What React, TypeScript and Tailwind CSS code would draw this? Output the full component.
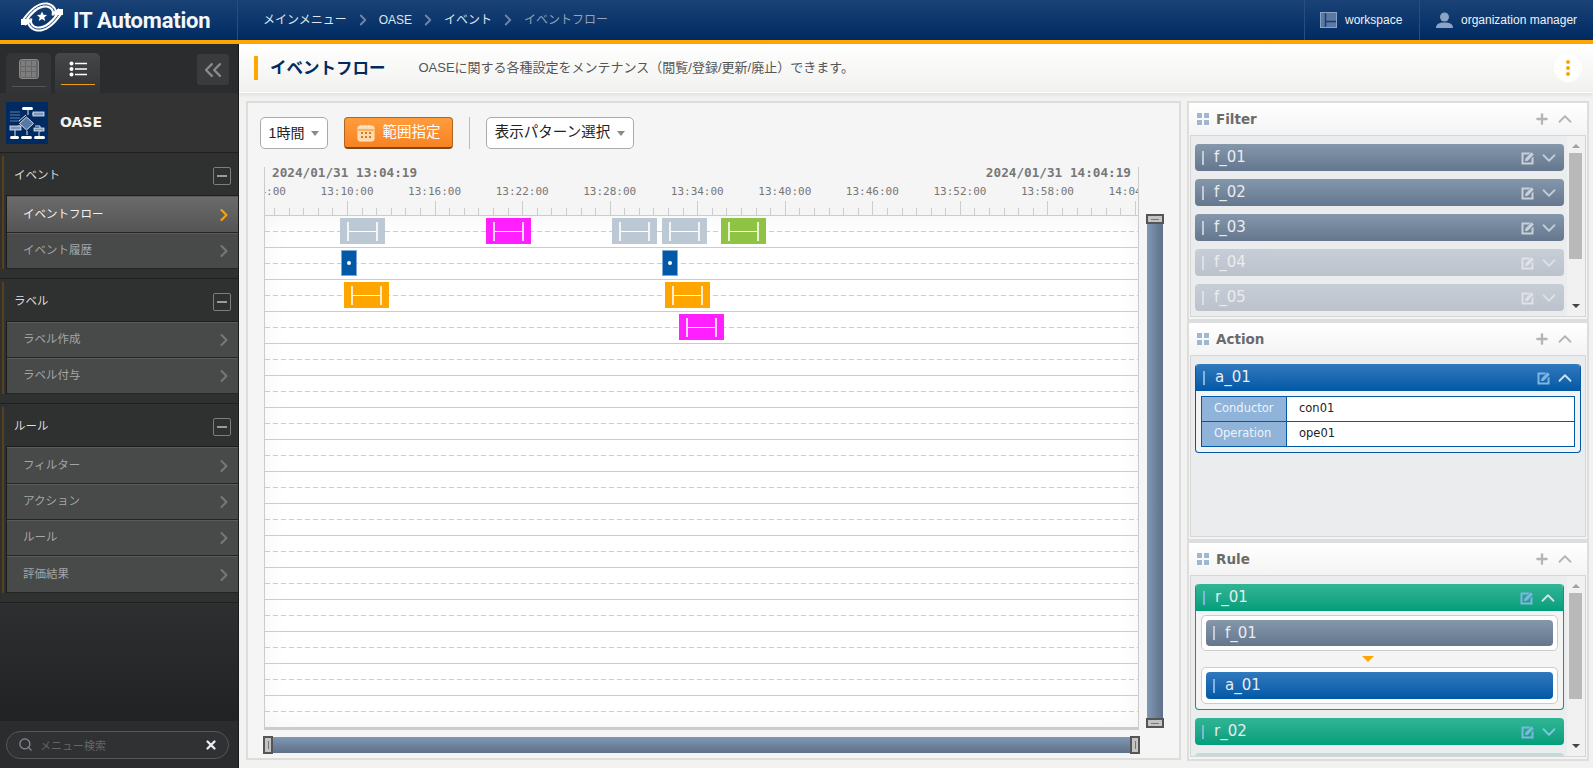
import React from 'react';
import { ChevronDown, ChevronRight, ChevronUp, ChevronsLeft, Plus, Search, X } from 'lucide-react';

const jp = "font-['Liberation_Sans','Noto_Sans_CJK_JP',sans-serif]";
const dv = "font-['DejaVu_Sans','Noto_Sans_CJK_JP',sans-serif]";
const mono = "font-['DejaVu_Sans_Mono',monospace]";

const timeLabels = ['13:04:00', '13:10:00', '13:16:00', '13:22:00', '13:28:00', '13:34:00', '13:40:00', '13:46:00', '13:52:00', '13:58:00', '14:04:00'];
const MAJOR = 87.55;
const FIRST_MAJOR = -5.5;

// bars on the time canvas, x relative to chart left, row index
const bars = [
  { x: 75, row: 0, w: 45, kind: 'grey' },
  { x: 221, row: 0, w: 45, kind: 'magenta' },
  { x: 347, row: 0, w: 45, kind: 'grey' },
  { x: 397, row: 0, w: 45, kind: 'grey' },
  { x: 456, row: 0, w: 45, kind: 'green' },
  { x: 79, row: 2, w: 45, kind: 'orange' },
  { x: 400, row: 2, w: 45, kind: 'orange' },
  { x: 414, row: 3, w: 45, kind: 'magenta' },
];

const barColor: Record<string, string> = {
  grey: 'bg-[#bcc8d3]',
  magenta: 'bg-[#ff1fff]',
  green: 'bg-[#8fc343]',
  orange: 'bg-[#ffa500]',
};

const EditIcon = ({ className = '' }: { className?: string }) => (
  <svg width="14" height="14" viewBox="0 0 14 14" className={className}>
    <path d="M.5 1.500h9L7.500 3.500H2.500v8h8V7.500l2-2V13.500H.5z" fill="currentColor" />
    <path d="M4.500 7.500 10.500 1.200l2.300 2.300-6 6.200-2.800.6z" fill="currentColor" />
  </svg>
);

const Logo = () => (
  <svg width="42" height="32" viewBox="0 0 42 32" className="-mt-[6px] shrink-0">
    <g fill="none" strokeLinecap="butt">
      <path d="M3 20C10 10 17 3 26 4c5 1 9 5 7 11" stroke="#fff" strokeWidth="5" />
      <path d="M3 20C10 10 17 3 26 4c5 1 9 5 7 11" stroke="#1a4277" strokeWidth="1" />
      <path d="M39 12C32 22 25 29 16 28c-5-1-9-5-7-11" stroke="#fff" strokeWidth="5" />
      <path d="M39 12C32 22 25 29 16 28c-5-1-9-5-7-11" stroke="#1a4277" strokeWidth="1" />
      <path d="M33 13 39 9M9 19 3 23" stroke="#fff" strokeWidth="4" />
    </g>
    <rect x="0" y="18" width="6" height="6" fill="#fff" />
    <rect x="36" y="8" width="6" height="6" fill="#fff" />
    <path d="M21 10.500l1.500 3.300 3.500.3-2.700 2.300.9 3.500-3.200-1.900-3.200 1.900.9-3.500-2.700-2.300 3.500-.3z" fill="#fff" />
  </svg>
);

const OaseIcon = () => (
  <svg width="42" height="42" viewBox="0 0 42 42" className="shrink-0">
    <rect width="42" height="42" fill="#002b62" />
    <g stroke="#dfe6f0" strokeWidth="1" fill="none">
      <path d="M22 6v7M32 12H26M12 24H14M29 24h5v6M21 29v4M9 27v7M33 30v4" />
      <path d="M4 10h10M4 13h10M4 16h10M4 19h10" stroke="#5d7ca8" />
      <path d="M20 13l-7 6" />
    </g>
    <rect x="16" y="5" width="11" height="3" rx="1.500" fill="#fff" />
    <rect x="27" y="10" width="11" height="4" fill="#7c97bd" stroke="#fff" strokeWidth=".7" />
    <path d="M20.500 15l7 6.500-7 6.500-7-6.500z" fill="#5678a8" stroke="#fff" strokeWidth=".8" />
    <rect x="4" y="24" width="11" height="4" fill="#7c97bd" stroke="#fff" strokeWidth=".7" />
    <rect x="28" y="26" width="10" height="3" fill="#7c97bd" stroke="#fff" strokeWidth=".7" />
    <rect x="15" y="34" width="11" height="3" rx="1.500" fill="#fff" />
    <rect x="4" y="34" width="9" height="3" rx="1.500" fill="#fff" />
    <rect x="28" y="34" width="11" height="3" rx="1.500" fill="#fff" />
  </svg>
);

const MenuItem = ({ label, active = false, tall = false }: { label: string; active?: boolean; tall?: boolean }) => (
  <div
    className={`flex items-center justify-between border-b border-b-[#252525] border-t border-t-[#5a5c5c] pl-[16px] pr-[4px] ${tall ? 'h-[37px]' : 'h-[36px]'} ${
      active ? 'bg-gradient-to-b from-[#6b6b6b] to-[#555555] text-[#f2f2f2]' : 'bg-[#484a4a] text-[#a5a5a5]'
    }`}
  >
    <span className="text-[11.500px]">{label}</span>
    <ChevronRight size={20} strokeWidth={2.5} className={active ? 'text-[#ffa500]' : 'text-[#777777]'} />
  </div>
);

const MenuSection = ({ title, items, active, tallItems = [] }: { title: string; items: string[]; active?: string; tallItems?: string[] }) => (
  <div className="border-b border-b-[#1f1f1f] bg-[#2f3030] pb-[9px] pt-[3px]">
    <div className="relative ml-[2px] border-l-[2px] border-l-[#5b3f1c]">
      <div className="flex h-[39px] items-center justify-between pl-[10px] pr-[7px] text-[11.500px] text-[#dddddd]">
        <span>{title}</span>
        <span className="flex h-[18px] w-[18px] items-center justify-center rounded-[2px] border border-[#7d7d7d]">
          <span className="h-[2px] w-[10px] bg-[#9a9a9a]" />
        </span>
      </div>
      <div className="ml-[2px] border-l border-t border-[#1d1d1d]">
        {items.map((item) => (
          <MenuItem key={item} label={item} active={item === active} tall={item === active || tallItems.includes(item)} />
        ))}
      </div>
    </div>
  </div>
);

const Sidebar = () => (
  <aside className={`flex w-[239px] shrink-0 flex-col border-r border-r-[#1a1a1a] bg-[#2b2c2e] ${jp}`}>
    <div className="flex h-[49px] shrink-0 items-end pl-[6px] pr-[9px]">
      <div className="mr-[4px] flex h-[40px] w-[45px] flex-col items-center justify-center rounded-t-[5px] bg-[#343536]">
        <span className="grid h-[20px] w-[20px] grid-cols-3 gap-[1px] rounded-[3px] border border-[#8a8a8a] bg-[#666666] p-[1px]">
          {Array.from({ length: 9 }).map((_, i) => (
            <span key={i} className="bg-[#7d7d7d]" />
          ))}
        </span>
        <span className="mt-[7px] h-[1px] w-[34px] bg-[#555555]" />
      </div>
      <div className="flex h-[40px] w-[45px] flex-col items-center justify-center rounded-t-[5px] bg-gradient-to-b from-[#454647] to-[#333435]">
        <svg width="18" height="16" viewBox="0 0 18 16">
          <circle cx="2.500" cy="2.500" r="2" fill="#fff" />
          <circle cx="2.500" cy="8" r="2" fill="#fff" />
          <circle cx="2.500" cy="13.500" r="2" fill="#fff" />
          <path d="M6 2.500h12M6 8h12M6 13.500h12" stroke="#fff" strokeWidth="1.500" />
        </svg>
        <span className="mt-[7px] h-[1px] w-[34px] bg-[#f39a1c]" />
      </div>
      <div className="mb-[8px] ml-auto flex h-[31px] w-[32px] items-center justify-center rounded-[3px] bg-[#3a3b3c]">
        <ChevronsLeft size={28} strokeWidth={2} className="text-[#8a8a8a]" />
      </div>
    </div>
    <div className="flex h-[60px] shrink-0 items-center gap-[12px] border-b border-b-[#1f1f1f] bg-[#333333] pl-[6px]">
      <OaseIcon />
      <span className={`${dv} text-[14px] font-bold text-[#f2f2f2]`}>OASE</span>
    </div>
    <MenuSection title="イベント" items={['イベントフロー', 'イベント履歴']} active="イベントフロー" />
    <MenuSection title="ラベル" items={['ラベル作成', 'ラベル付与']} />
    <MenuSection title="ルール" items={['フィルター', 'アクション', 'ルール', '評価結果']} tallItems={['フィルター', '評価結果']} />
    <div className="min-h-0 flex-1 bg-gradient-to-b from-[#2e2f31] to-[#212224]" />
    <div className="flex h-[47px] shrink-0 items-center bg-[#2b2c2e] px-[6px]">
      <div className="flex h-[28px] w-[223px] items-center rounded-full border border-[#565656] bg-[#303132] pl-[11px] pr-[10px]">
        <Search size={15} strokeWidth={2} className="text-[#8a8f96]" />
        <span className="ml-[7px] flex-1 pt-[3px] text-[11px] text-[#666666]">メニュー検索</span>
        <X size={14} strokeWidth={4} className="text-[#e8eef5]" />
      </div>
    </div>
  </aside>
);

const Header = () => (
  <header className={`flex h-[44px] shrink-0 border-b-[4px] border-b-[#ffa500] bg-gradient-to-b from-[#1a4277] to-[#002b62] text-[12px] shadow-[0_1px_0_#222] ${jp}`}>
    <div className="flex w-[238px] items-center gap-[10px] border-r border-r-[#2a4d80] pl-[21px]">
      <Logo />
      <span className="font-['Roboto',sans-serif] text-[22px] font-bold tracking-[-0.2px] text-[#f4f6f9]">IT Automation</span>
    </div>
    <nav className="flex flex-1 items-center pl-[25px] text-[#dfe5ee]">
      <span>メインメニュー</span>
      <ChevronRight size={18} strokeWidth={2.5} className="mx-[7px] text-[#6f86a6]" />
      <span>OASE</span>
      <ChevronRight size={18} strokeWidth={2.5} className="mx-[7px] text-[#6f86a6]" />
      <span>イベント</span>
      <ChevronRight size={18} strokeWidth={2.5} className="mx-[7px] text-[#6f86a6]" />
      <span className="text-[#90a1ba]">イベントフロー</span>
    </nav>
    <div className="flex w-[115px] items-center gap-[8px] border-l border-l-[#2a4d80] pl-[15px] text-[12px] text-[#eef1f6]">
      <svg width="17" height="16" viewBox="0 0 17 16" className="shrink-0">
        <rect x=".5" y=".5" width="16" height="15" fill="#5a7aa5" stroke="#8ba3c4" />
        <path d="M5.500 1v14M5.500 9.500H16" stroke="#1a3d70" strokeWidth="1.500" />
      </svg>
      <span>workspace</span>
    </div>
    <div className="flex w-[174px] items-center gap-[8px] border-l border-l-[#2a4d80] pl-[16px] text-[12px] text-[#eef1f6]">
      <svg width="17" height="16" viewBox="0 0 17 16" className="shrink-0">
        <circle cx="8.500" cy="5" r="4.500" fill="#8ba3c4" />
        <path d="M0 16c0-4 3-5.500 8.500-5.500S17 12 17 16z" fill="#8ba3c4" />
      </svg>
      <span>organization manager</span>
    </div>
  </header>
);

const Caret = () => (
  <span className="ml-[7px] h-0 w-0 border-x-[4px] border-t-[5px] border-x-transparent border-t-[#8a8a8a]" />
);

const Toolbar = () => (
  <div className={`flex h-[32px] items-stretch ${jp}`}>
    <div className="flex w-[68px] items-center justify-center rounded-[5px] border border-[#aaaaaa] bg-white text-[14px] text-[#222222]">
      1時間
      <Caret />
    </div>
    <div className="ml-[16px] flex w-[109px] items-center justify-center gap-[8px] rounded-[4px] border border-[#b0661f] border-b-[2px] border-b-[#7a4a1c] bg-gradient-to-b from-[#ff9d3d] to-[#f8821f] text-[14.500px] text-white">
      <svg width="18" height="18" viewBox="0 0 18 18">
        <rect x="1" y="2" width="16" height="15" rx="2" fill="#ffd9a8" stroke="#ffe9cf" />
        <path d="M1 6h16" stroke="#e88a30" />
        <path d="M4 1v3M8 1v3M12 1v3" stroke="#ffe9cf" />
        <path d="M4 8h2v2H4zM8 8h2v2H8zM12 8h2v2h-2zM4 12h2v2H4zM8 12h2v2H8zM12 12h2v2h-2z" fill="#d07d2f" />
      </svg>
      範囲指定
    </div>
    <span className="mx-[16px] w-[1px] bg-[#bbbbbb]" />
    <div className="flex w-[148px] items-center justify-center rounded-[5px] border border-[#aaaaaa] bg-white text-[14.500px] text-[#222222]">
      表示パターン選択
      <Caret />
    </div>
  </div>
);

const Ruler = () => {
  const ticks = Array.from({ length: 61 }, (_, i) => FIRST_MAJOR + (i * MAJOR) / 6);
  return (
    <div className="relative h-[49px] overflow-hidden border-b border-b-[#cccccc]">
      <div className={`flex justify-between pl-[7px] pr-[7px] text-[12.700px] font-bold leading-[12px] text-[#777777] ${mono}`}>
        <span>2024/01/31 13:04:19</span>
        <span>2024/01/31 14:04:19</span>
      </div>
      {timeLabels.map((label, i) => (
        <span
          key={label}
          className={`absolute top-[18px] -translate-x-1/2 text-[11px] leading-[14px] text-[#777777] ${mono}`}
          style={{ left: FIRST_MAJOR + i * MAJOR }}
        >
          {label}
        </span>
      ))}
      <svg className="absolute bottom-0 left-0 h-[14px] w-full">
        {ticks.map((x, i) => (
          <line key={i} x1={Math.round(x) + 0.5} x2={Math.round(x) + 0.5} y1={i % 6 === 0 ? 0 : 7} y2={14} stroke="#cccccc" />
        ))}
      </svg>
    </div>
  );
};

const EventBar = ({ w, kind }: { w: number; kind: string }) => (
  <div className={`flex h-[26px] items-center justify-center ${barColor[kind]}`} style={{ width: w }}>
    <span className="flex h-[19px] w-[31px] items-center border-x-2 border-x-[#ffffffcc]">
      <span className="h-[1px] w-full bg-white" />
    </span>
  </div>
);

const Chart = () => (
  <div className="w-[875px] shrink-0 border-x border-[#cccccc]">
    <Ruler />
    <div className="relative border-b-2 border-b-[#cccccc] bg-white shadow-[inset_0_0_24px_rgba(0,0,0,0.05)]">
      {Array.from({ length: 16 }).map((_, i) => (
        <div key={i} className="flex h-[32px] items-center border-b border-b-[#cccccc] last:h-[29px] last:border-b-0">
          <span className="h-[1px] w-full bg-[repeating-linear-gradient(90deg,#cccccc_0,#cccccc_5px,transparent_5px,transparent_8px)]" />
        </div>
      ))}
      {bars.map((b, i) => (
        <div key={i} className="absolute" style={{ left: b.x, top: 2 + b.row * 32 }}>
          <EventBar w={b.w} kind={b.kind} />
        </div>
      ))}
      {[76, 397].map((x) => (
        <div key={x} className="absolute top-[34px] flex h-[26px] w-[16px] items-center justify-center border border-[#7fa8d4] bg-[#0058a6]" style={{ left: x }}>
          <span className="h-[4px] w-[4px] rounded-full bg-white" />
        </div>
      ))}
    </div>
  </div>
);

const SliderHandle = ({ vertical = false }: { vertical?: boolean }) => (
  <div className={`flex shrink-0 items-center justify-center border-2 border-[#555555] bg-[#c4c4c4] ${vertical ? 'h-[10px] w-[18px]' : 'h-[18px] w-[10px]'}`}>
    <span className={vertical ? 'h-[1px] w-[8px] bg-[#777777]' : 'h-[8px] w-[1px] bg-[#777777]'} />
  </div>
);

const EventPanel = () => (
  <section className="flex min-w-0 flex-1 flex-col border-2 border-[#dddddd] bg-[#f5f5f5] pl-[12px] pt-[14px]">
    <Toolbar />
    <div className="mt-[18px] flex">
      <div className="ml-[4px]">
        <Chart />
      </div>
      <div className="ml-[7px] mt-[47px] flex h-[514px] w-[18px] shrink-0 flex-col items-center">
        <SliderHandle vertical />
        <div className="w-[16px] flex-1 bg-gradient-to-r from-[#8098b5] to-[#5f7089]" />
        <SliderHandle vertical />
      </div>
    </div>
    <div className="ml-[3px] mt-[6px] flex h-[18px] w-[877px] items-center">
      <SliderHandle />
      <div className="h-[16px] flex-1 bg-gradient-to-b from-[#8098b5] to-[#5f7089]" />
      <SliderHandle />
    </div>
  </section>
);

const cardTone = {
  grey: 'from-[#8597ab] to-[#65778e]',
  blue: 'from-[#2f79bd] to-[#0058a6]',
  green: 'from-[#2fb595] to-[#009e7b]',
};

type CardBarProps = {
  name: string;
  tone: 'grey' | 'blue' | 'green';
  open?: boolean;
  tools?: boolean;
  rounded?: string;
  faded?: boolean;
  short?: boolean;
};

const CardBar = ({ name, tone, open, tools = true, rounded = 'rounded-[4px]', faded = false, short = false }: CardBarProps) => (
  <div className={`flex shrink-0 items-center bg-gradient-to-b pl-[7px] pr-[4px] ${short ? 'h-[26px]' : 'h-[27px]'} ${cardTone[tone]} ${rounded} ${faded ? 'opacity-35' : ''}`}>
    <span className={`h-[14px] w-[2px] ${tone === 'grey' ? 'bg-[#c3ccd6]' : 'bg-[#7fb5e0]'}`} />
    <span className={`${dv} ml-[10px] flex-1 text-[15px] leading-none text-[#e8ebf0]`}>{name}</span>
    {tools && (
      <>
        <EditIcon className={tone === 'grey' ? 'text-[#c9d0d9]' : 'text-[#7fb5e0]'} />
        {open ? (
          <ChevronUp size={22} strokeWidth={2} className="ml-[3px] text-[#cfe0ee]" />
        ) : (
          <ChevronDown size={22} strokeWidth={2} className={`ml-[3px] ${tone === 'grey' ? 'text-[#c3ccd6]' : 'text-[#7fc6de]'}`} />
        )}
      </>
    )}
  </div>
);

const Scrollbar = ({ thumbTop, thumbH }: { thumbTop: number; thumbH: number }) => (
  <div className="relative w-[18px] shrink-0 bg-[#f1f1f1]">
    <span className="absolute left-[5px] top-[8px] h-0 w-0 border-x-[4px] border-b-[4px] border-x-transparent border-b-[#a0a0a0]" />
    <span className="absolute left-[2px] w-[13px] bg-[#b9b9b9]" style={{ top: thumbTop, height: thumbH }} />
    <span className="absolute bottom-[8px] left-[5px] h-0 w-0 border-x-[4px] border-t-[4px] border-x-transparent border-t-[#444444]" />
  </div>
);

const SidePanel = ({ title, scroll, children }: { title: string; scroll?: React.ReactNode; children: React.ReactNode }) => (
  <section className="flex h-[220px] shrink-0 flex-col border-2 border-[#dddddd] bg-[#f4f4f4]">
    <div className="flex h-[32px] shrink-0 items-center bg-gradient-to-b from-white to-[#f4f4f4] pl-[8px] pr-[11px]">
      <span className="grid h-[12px] w-[12px] grid-cols-2 gap-[2px]">
        <span className="bg-[#9fb7d0]" />
        <span className="bg-[#9fb7d0]" />
        <span className="bg-[#9fb7d0]" />
        <span className="bg-[#9fb7d0]" />
      </span>
      <span className={`${dv} ml-[7px] flex-1 text-[13.500px] font-bold text-[#6b6b6b]`}>{title}</span>
      <Plus size={16} strokeWidth={3.5} className="text-[#b5b5b5]" />
      <ChevronUp size={22} strokeWidth={2} className="ml-[4px] text-[#b5b5b5]" />
    </div>
    <div className="mx-[1px] mb-[2px] flex min-h-0 flex-1 border border-[#d6d6d6] bg-[#ebecee]">
      <div className="flex min-w-0 flex-1 flex-col gap-[8px] overflow-hidden pl-[4px] pr-[3px] pt-[8px]">{children}</div>
      {scroll}
    </div>
  </section>
);

const FlowBox = ({ name, tone, short }: { name: string; tone: 'grey' | 'blue'; short?: boolean }) => (
  <div className="rounded-[5px] border border-[#cccccc] bg-white p-[4px]">
    <CardBar name={name} tone={tone} tools={false} short={short} />
  </div>
);

const RightColumn = () => (
  <div className={`flex w-[402px] shrink-0 flex-col ${jp}`}>
    <SidePanel title="Filter" scroll={<Scrollbar thumbTop={17} thumbH={106} />}>
      <CardBar name="f_01" tone="grey" />
      <CardBar name="f_02" tone="grey" />
      <CardBar name="f_03" tone="grey" />
      <CardBar name="f_04" tone="grey" faded />
      <CardBar name="f_05" tone="grey" faded />
    </SidePanel>
    <SidePanel title="Action">
      <div className="mr-[1px] rounded-[4px] border-x border-b border-[#0058a6] bg-[#f4f4f4]">
        <CardBar name="a_01" tone="blue" open rounded="rounded-t-[4px]" />
        <div className="px-[5px] pb-[5px] pt-[5px]">
          <table className={`w-full border-collapse text-[11.500px] ${dv}`}>
            <tbody>
              <tr className="h-[25px]">
                <th className="w-[85px] border border-[#0058a6] bg-[#8fb3d9] pl-[12px] text-left font-normal text-[#eef4fa]">Conductor</th>
                <td className="border border-[#0058a6] bg-white pl-[12px] text-[#222222]">con01</td>
              </tr>
              <tr className="h-[25px]">
                <th className="border border-[#0058a6] bg-[#8fb3d9] pl-[12px] text-left font-normal text-[#eef4fa]">Operation</th>
                <td className="border border-[#0058a6] bg-white pl-[12px] text-[#222222]">ope01</td>
              </tr>
            </tbody>
          </table>
        </div>
      </div>
    </SidePanel>
    <SidePanel title="Rule" scroll={<Scrollbar thumbTop={17} thumbH={106} />}>
      <div className="shrink-0 rounded-[4px] border-x border-b border-[#009e7b] bg-[#f4f4f4]">
        <CardBar name="r_01" tone="green" open rounded="rounded-t-[4px]" />
        <div className="px-[5px] pb-[5px] pt-[4px]">
          <FlowBox name="f_01" tone="grey" short />
          <div className="flex h-[16px] items-center justify-center pr-[24px]">
            <span className="h-0 w-0 border-x-[6px] border-t-[6px] border-x-transparent border-t-[#ffa500]" />
          </div>
          <FlowBox name="a_01" tone="blue" />
        </div>
      </div>
      <CardBar name="r_02" tone="green" />
      <div className="opacity-25">
        <CardBar name="r_03" tone="green" />
      </div>
    </SidePanel>
  </div>
);

const TitleBar = () => (
  <div className={`flex h-[49px] shrink-0 items-center border-b border-b-white bg-gradient-to-b from-white to-[#f1f1ef] pl-[15px] pr-[11px] shadow-[0_2px_4px_rgba(0,0,0,0.08)] ${jp}`}>
    <span className="h-[24px] w-[4px] bg-[#ffa500]" />
    <h1 className="ml-[12px] text-[16.500px] font-bold text-[#002b62]">イベントフロー</h1>
    <p className="ml-[33px] flex-1 text-[13px] text-[#555555]">OASEに関する各種設定をメンテナンス（閲覧/登録/更新/廃止）できます。</p>
    <span className="flex h-[28px] w-[28px] flex-col items-center justify-center gap-[2px] rounded-full bg-white">
      <span className="h-[4px] w-[4px] rounded-full bg-[#ffa500]" />
      <span className="h-[4px] w-[4px] rounded-full bg-[#ffa500]" />
      <span className="h-[4px] w-[4px] rounded-full bg-[#ffa500]" />
    </span>
  </div>
);

export default function App() {
  return (
    <div className={`flex h-screen w-screen flex-col overflow-hidden bg-[#f2f2f0] ${jp}`}>
      <Header />
      <div className="flex min-h-0 flex-1">
        <Sidebar />
        <main className="flex min-w-0 flex-1 flex-col">
          <TitleBar />
          <div className="flex min-h-0 flex-1 gap-[6px] pb-[8px] pl-[7px] pr-[4px] pt-[8px]">
            <EventPanel />
            <RightColumn />
          </div>
        </main>
      </div>
    </div>
  );
}
